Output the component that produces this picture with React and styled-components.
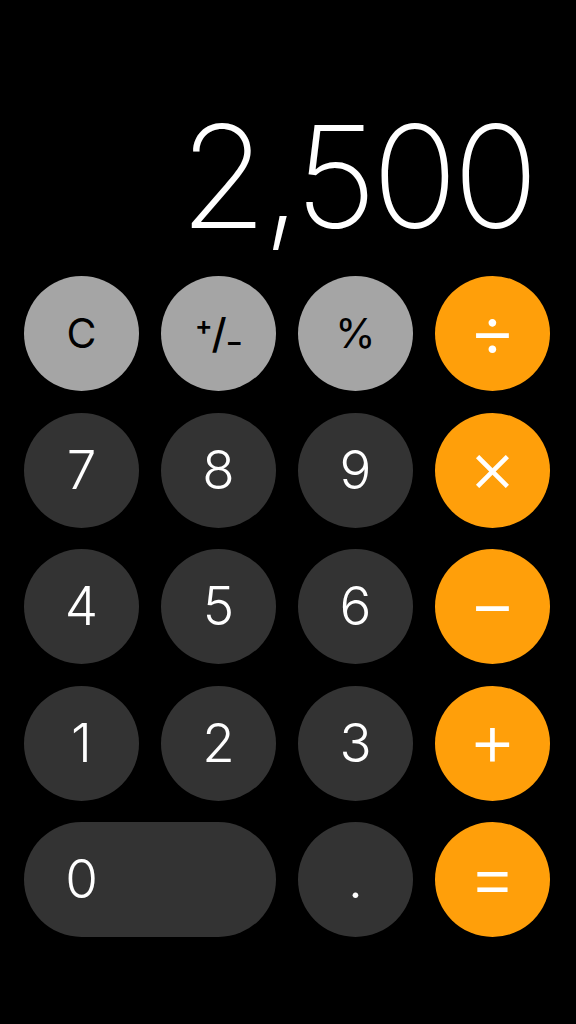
import React from "react";
import styled, { createGlobalStyle } from "styled-components";

const Global = createGlobalStyle`
  html, body { margin: 0; padding: 0; background: #000; }
  body { font-family: Inter, "Liberation Sans", sans-serif; }
`;

const Screen = styled.div`
  width: 576px;
  height: 1024px;
  background: #000;
  display: flex;
  flex-direction: column;
  box-sizing: border-box;
  overflow: hidden;
`;

const Display = styled.div`
  height: 276px;
  box-sizing: border-box;
  display: flex;
  align-items: flex-end;
  justify-content: flex-end;
  padding: 0 42px 29px 0;
  color: #fff;
  font-family: Inter, sans-serif;
  font-weight: 200;
  font-size: 142px;
  line-height: 1;
  letter-spacing: -4.8px;
`;

const Pad = styled.div`
  display: grid;
  grid-template-columns: repeat(4, 115px);
  grid-auto-rows: 115px;
  column-gap: 22px;
  row-gap: 21.5px;
  padding-left: 24px;
`;

const palette = {
  fn: { bg: "#a5a5a5", fg: "#000", size: "41px", weight: 400, lift: "0px" },
  num: { bg: "#333333", fg: "#fff", size: "53px", weight: 350, lift: "0px" },
  op: { bg: "#ff9f0a", fg: "#fff", size: "74px", weight: 300, lift: "8px" },
};

const Key = styled.button`
  border: none;
  margin: 0;
  padding: 0 0 ${(p) => palette[p.$kind].lift} 0;
  border-radius: 57.5px;
  background: ${(p) => palette[p.$kind].bg};
  color: ${(p) => palette[p.$kind].fg};
  grid-column: span ${(p) => (p.$wide ? 2 : 1)};
  display: flex;
  align-items: center;
  justify-content: ${(p) => (p.$wide ? "flex-start" : "center")};
  font-family: Inter, sans-serif;
  font-size: ${(p) => palette[p.$kind].size};
  font-weight: ${(p) => palette[p.$kind].weight};
  line-height: 1;
  cursor: pointer;
`;

const Label = styled.span`
  width: 115px;
  text-align: center;
  display: inline-block;
`;

const Sign = styled.span`
  display: inline-flex;
  align-items: center;
  font-size: 41px;
  font-weight: 500;
  line-height: 1;
  letter-spacing: -1px;
`;

const SmallMark = styled.span`
  font-size: 26px;
  font-weight: 600;
  align-self: ${(p) => (p.$up ? "flex-start" : "flex-end")};
  margin: ${(p) => (p.$up ? "0" : "0 0 -1px 0")};
`;

const rows = [
  [["C", "fn"], ["±", "fn"], ["%", "fn"], ["÷", "op"]],
  [["7", "num"], ["8", "num"], ["9", "num"], ["×", "op"]],
  [["4", "num"], ["5", "num"], ["6", "num"], ["−", "op"]],
  [["1", "num"], ["2", "num"], ["3", "num"], ["+", "op"]],
  [["0", "num", true], [".", "num"], ["=", "op"]],
];

export default function App() {
  return (
    <Screen>
      <Global />
      <Display>2,500</Display>
      <Pad>
        {rows.flat().map(([label, kind, wide], i) => (
          <Key key={i} $kind={kind} $wide={wide}>
            {label === "±" ? (
              <Sign>
                <SmallMark $up>+</SmallMark>/<SmallMark>−</SmallMark>
              </Sign>
            ) : wide ? (
              <Label>{label}</Label>
            ) : (
              label
            )}
          </Key>
        ))}
      </Pad>
    </Screen>
  );
}
